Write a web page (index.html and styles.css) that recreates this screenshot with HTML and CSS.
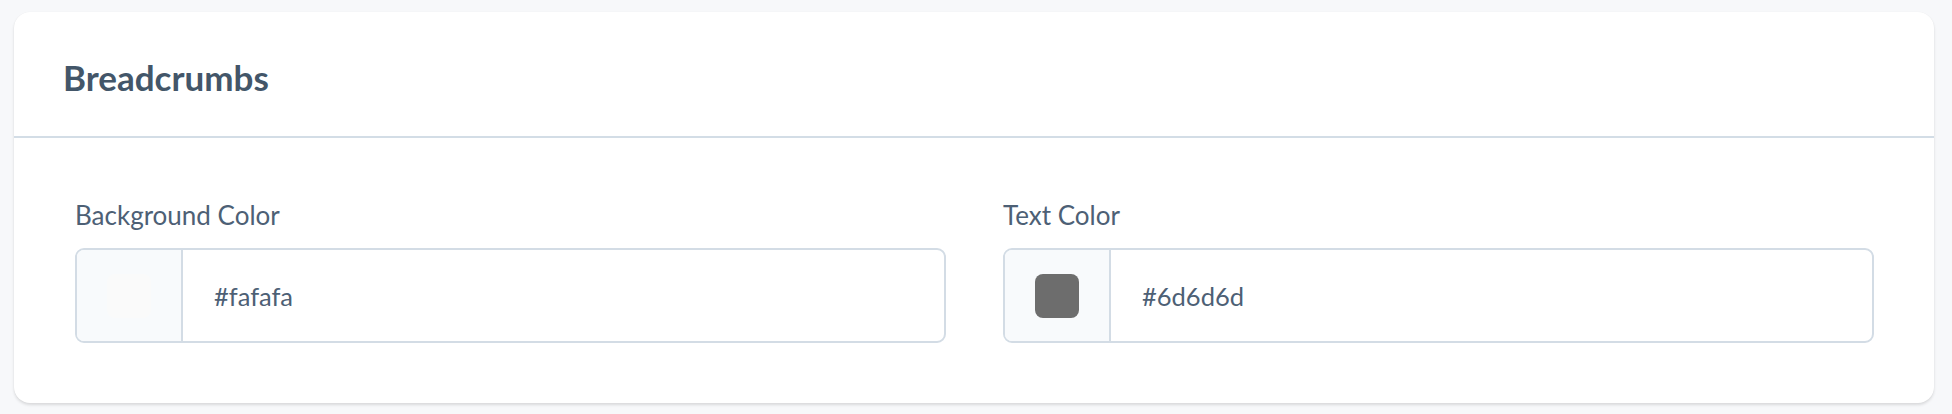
FILE: index.html
```html
<!DOCTYPE html>
<html>
<head>
<meta charset="utf-8">
<link rel="stylesheet" href="styles.css">
</head>
<body>
<div class="card">
  <div class="card-header">
    <h2 class="title">Breadcrumbs</h2>
  </div>
  <div class="card-body">
    <div class="field">
      <label class="label">Background Color</label>
      <div class="color-input">
        <div class="swatch-cell"><span class="swatch swatch-light"></span></div>
        <div class="value">#fafafa</div>
      </div>
    </div>
    <div class="field">
      <label class="label">Text Color</label>
      <div class="color-input">
        <div class="swatch-cell"><span class="swatch swatch-dark"></span></div>
        <div class="value">#6d6d6d</div>
      </div>
    </div>
  </div>
</div>
</body>
</html>
```
FILE: styles.css
```css
* { box-sizing: border-box; }
html, body { margin: 0; padding: 0; }
body {
  background: #f7f8fa;
  font-family: "Lato", "Noto Sans", sans-serif;
  padding: 12px 18px 12px 14px;
}
.card {
  width: 1920px;
  height: 391px;
  background: #ffffff;
  border-radius: 16px;
  box-shadow: 0 2px 3px rgba(0, 0, 0, 0.12), 0 0 1px rgba(0,0,0,0.06);
  overflow: hidden;
}
.card-header {
  height: 126px;
  border-bottom: 2px solid #d3dde6;
  display: flex;
  align-items: center;
  padding: 0 49px;
}
.title {
  margin: 0;
  font-size: 35px;
  font-weight: 700;
  color: #435669;
  padding-top: 6px;
}
.card-body {
  display: grid;
  grid-template-columns: 1fr 1fr;
  column-gap: 57px;
  padding: 60px 60px 0 61px;
}
.field {
  display: flex;
  flex-direction: column;
}
.label {
  font-size: 26px;
  color: #4d6075;
  line-height: 34px;
  margin-bottom: 16px;
}
.color-input {
  display: flex;
  height: 95px;
  border: 2px solid #d3dce5;
  border-radius: 9px;
  overflow: hidden;
}
.swatch-cell {
  width: 106px;
  flex: none;
  background: #f8fafc;
  border-right: 2px solid #d3dce5;
  display: flex;
  align-items: center;
  justify-content: center;
}
.swatch {
  width: 44px;
  height: 44px;
  border-radius: 8px;
  display: block;
}
.swatch-light { background: #fafafa; }
.swatch-dark { background: #6d6d6d; }
.value {
  display: flex;
  align-items: center;
  padding-left: 31px;
  font-size: 25.5px;
  color: #4d6075;
}
```
